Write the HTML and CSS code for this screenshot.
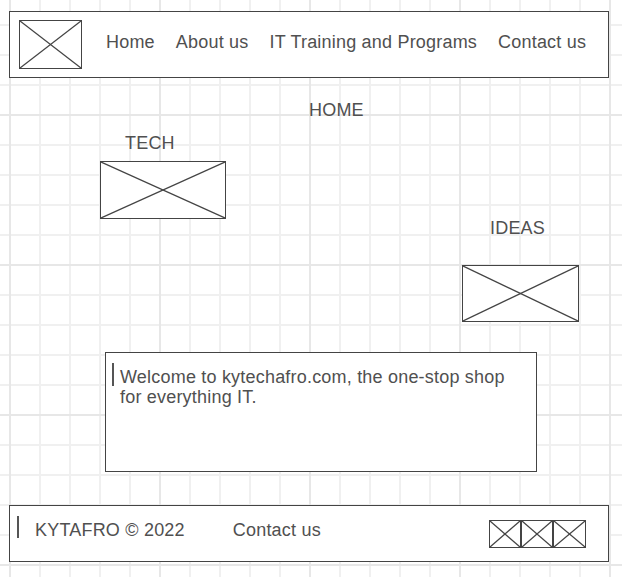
FILE: index.html
```html
<!DOCTYPE html>
<html lang="en">
<head>
<meta charset="utf-8">
<title>KYTAFRO</title>
<link rel="stylesheet" href="styles.css">
</head>
<body>
<header class="topbar">
  <svg class="ph logo" viewBox="0 0 100 100" preserveAspectRatio="none" aria-hidden="true">
    <line x1="0" y1="0" x2="100" y2="100" vector-effect="non-scaling-stroke"/>
    <line x1="100" y1="0" x2="0" y2="100" vector-effect="non-scaling-stroke"/>
  </svg>
  <nav class="nav">
    <a class="nav-link">Home</a>
    <a class="nav-link">About us</a>
    <a class="nav-link">IT Training and Programs</a>
    <a class="nav-link">Contact us</a>
  </nav>
</header>
<main class="content">
  <h1 class="page-title">HOME</h1>
  <section class="showcase">
    <div class="feature feature-tech">
      <h2 class="feature-label">TECH</h2>
      <svg class="ph ph-tech" viewBox="0 0 100 100" preserveAspectRatio="none" aria-hidden="true">
        <line x1="0" y1="0" x2="100" y2="100" vector-effect="non-scaling-stroke"/>
        <line x1="100" y1="0" x2="0" y2="100" vector-effect="non-scaling-stroke"/>
      </svg>
    </div>
    <div class="feature feature-ideas">
      <h2 class="feature-label">IDEAS</h2>
      <svg class="ph ph-ideas" viewBox="0 0 100 100" preserveAspectRatio="none" aria-hidden="true">
        <line x1="0" y1="0" x2="100" y2="100" vector-effect="non-scaling-stroke"/>
        <line x1="100" y1="0" x2="0" y2="100" vector-effect="non-scaling-stroke"/>
      </svg>
    </div>
  </section>
  <div class="welcome">
    <span class="cursor"></span>
    <p class="welcome-text">Welcome to kytechafro.com, the one-stop shop for everything IT.</p>
  </div>
</main>
<footer class="footer">
  <span class="cursor cursor-footer"></span>
  <span class="copy">KYTAFRO © 2022</span>
  <a class="footer-link">Contact us</a>
  <svg class="social" width="97" height="28" viewBox="0 0 97 28" aria-hidden="true">
    <rect x="0.5" y="0.5" width="31" height="27"/>
    <line x1="1" y1="1" x2="31" y2="27"/>
    <line x1="31" y1="1" x2="1" y2="27"/>
    <rect x="32.5" y="0.5" width="31" height="27"/>
    <line x1="33" y1="1" x2="63" y2="27"/>
    <line x1="63" y1="1" x2="33" y2="27"/>
    <rect x="64.5" y="0.5" width="32" height="27"/>
    <line x1="65" y1="1" x2="96" y2="27"/>
    <line x1="96" y1="1" x2="65" y2="27"/>
  </svg>
</footer>
</body>
</html>
```

FILE: styles.css
```css
* {
  box-sizing: border-box;
}

html,
body {
  margin: 0;
  padding: 0;
  min-height: 100%;
}

body {
  width: 622px;
  min-height: 577px;
  font-family: "Liberation Sans", Arial, sans-serif;
  font-size: 18px;
  line-height: 21px;
  letter-spacing: 0.2px;
  color: #505050;
  background-color: #fff;
  background-image:
    linear-gradient(to right, #e7e7e7 0 2px, transparent 2px),
    linear-gradient(to bottom, #e7e7e7 0 2px, transparent 2px),
    linear-gradient(to right, #f0f0f0 0 2px, transparent 2px),
    linear-gradient(to bottom, #f0f0f0 0 2px, transparent 2px);
  background-size: 150px 150px, 150px 150px, 30px 30px, 30px 30px;
  background-position: 9px 0, 0 114px, 9px 0, 0 24px;
  overflow: hidden;
}

/* placeholder images */
.ph {
  display: block;
  background: #fff;
  border: 1px solid #444;
}

.ph line {
  stroke: #444;
  stroke-width: 1.3;
}

/* header */
.topbar {
  display: flex;
  align-items: center;
  width: 600px;
  height: 67px;
  margin: 11px 0 0 9px;
  padding-left: 9px;
  background: #fff;
  border: 1px solid #444;
}

.logo {
  width: 63px;
  height: 49px;
}

.nav {
  display: flex;
  gap: 21px;
  margin: 0 0 4px 24px;
}

.nav-link {
  color: #505050;
  text-decoration: none;
  white-space: nowrap;
}

/* main */
.content {
  display: flex;
  flex-direction: column;
}

.page-title {
  margin: 22px 0 0;
  padding-left: 309px;
  font-size: 18px;
  font-weight: normal;
  line-height: 21px;
}

.showcase {
  display: flex;
  align-items: flex-start;
  margin-top: 12px;
}

.feature-label {
  margin: 0;
  font-size: 18px;
  font-weight: normal;
  line-height: 21px;
}

.feature-tech {
  margin-left: 100px;
}

.feature-tech .feature-label {
  padding-left: 25px;
}

.ph-tech {
  width: 126px;
  height: 58px;
  margin-top: 7px;
}

.feature-ideas {
  margin-left: 236px;
  margin-top: 85px;
}

.feature-ideas .feature-label {
  padding-left: 28px;
}

.ph-ideas {
  width: 117px;
  height: 57px;
  margin-top: 26px;
}

.welcome {
  display: flex;
  align-items: flex-start;
  width: 432px;
  height: 120px;
  margin: 30px 0 0 105px;
  padding: 10px 0 0 6px;
  background: #fff;
  border: 1px solid #444;
}

.cursor {
  flex: none;
  display: block;
  width: 2px;
  height: 23px;
  background: #555;
}

.welcome-text {
  width: 405px;
  margin: 4px 0 0 6px;
  line-height: 20px;
}

/* footer */
.footer {
  display: flex;
  align-items: flex-start;
  width: 600px;
  height: 57px;
  margin: 33px 0 0 9px;
  padding-left: 7px;
  background: #fff;
  border: 1px solid #444;
}

.cursor-footer {
  height: 22px;
  margin-top: 10px;
}

.copy {
  margin: 14px 0 0 16px;
  white-space: nowrap;
}

.footer-link {
  margin: 14px 0 0 48px;
  color: #505050;
  text-decoration: none;
}

.social {
  display: block;
  margin: 14px 22px 0 auto;
}

.social rect {
  fill: #fff;
  stroke: #444;
  stroke-width: 1;
}

.social line {
  stroke: #444;
  stroke-width: 1.2;
}
```
